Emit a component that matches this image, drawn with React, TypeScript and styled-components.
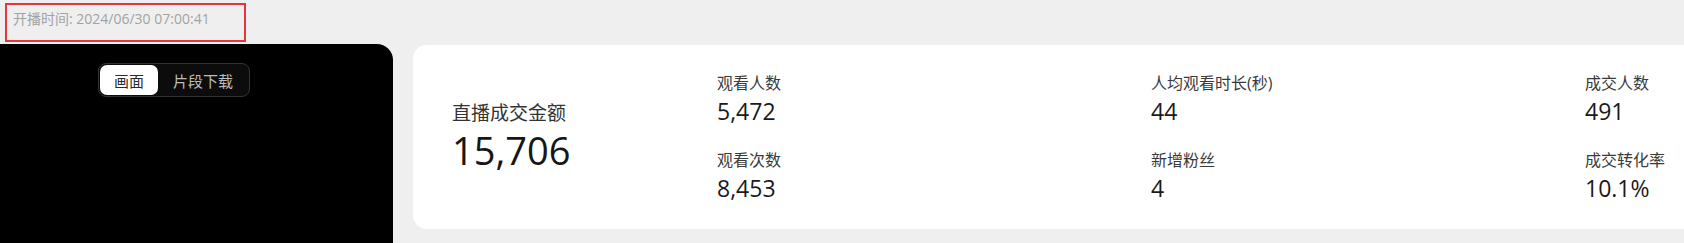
import React from "react";
import styled, { createGlobalStyle } from "styled-components";

const GlobalStyle = createGlobalStyle`
  html, body {
    margin: 0;
    padding: 0;
    background: #efefef;
    overflow: hidden;
  }
  body {
    font-family: "Open Sans", "Noto Sans CJK SC", sans-serif;
  }
`;

type Metric = { label: string; value: string };

const metricColumns: Metric[][] = [
  [
    { label: "观看人数", value: "5,472" },
    { label: "观看次数", value: "8,453" },
  ],
  [
    { label: "人均观看时长(秒)", value: "44" },
    { label: "新增粉丝", value: "4" },
  ],
  [
    { label: "成交人数", value: "491" },
    { label: "成交转化率", value: "10.1%" },
  ],
];

const App = () => {
  return (
    <>
      <GlobalStyle />
      <Page>
        <Header>
          <StartTime>开播时间: 2024/06/30 07:00:41</StartTime>
        </Header>
        <Main>
          <Player>
            <Segmented>
              <Segment active>画面</Segment>
              <Segment>片段下载</Segment>
            </Segmented>
          </Player>
          <StatsCard>
            <Headline>
              <HeadlineLabel>直播成交金额</HeadlineLabel>
              <HeadlineValue>15,706</HeadlineValue>
            </Headline>
            <MetricGrid>
              {metricColumns.map((col, i) => (
                <MetricColumn key={i}>
                  {col.map((m) => (
                    <MetricItem key={m.label}>
                      <MetricLabel>{m.label}</MetricLabel>
                      <MetricValue>{m.value}</MetricValue>
                    </MetricItem>
                  ))}
                </MetricColumn>
              ))}
            </MetricGrid>
          </StatsCard>
        </Main>
      </Page>
    </>
  );
};

const Page = styled.div`
  width: 1684px;
  height: 243px;
  overflow: hidden;
  display: flex;
  flex-direction: column;
`;

const Header = styled.div`
  height: 44px;
  flex-shrink: 0;
  display: flex;
  align-items: flex-start;
`;

const StartTime = styled.div`
  margin: 3px 0 0 5px;
  width: 241px;
  height: 39px;
  box-sizing: border-box;
  border: 2px solid #e2383d;
  padding: 4px 0 0 6px;
  font-size: 14px;
  line-height: 20px;
  color: #a3a3a3;
  white-space: nowrap;
`;

const Main = styled.div`
  display: flex;
  align-items: flex-start;
  gap: 20px;
  flex: 1;
`;

const Player = styled.div`
  width: 393px;
  height: 220px;
  flex-shrink: 0;
  background: #000;
  border-radius: 0 16px 0 0;
  box-sizing: border-box;
  padding: 19px 0 0 98px;
`;

const Segmented = styled.div`
  display: inline-flex;
  align-items: stretch;
  padding: 1px;
  height: 34px;
  box-sizing: border-box;
  border: 1px solid #333;
  border-radius: 8px;
  background: #0c0c0c;
`;

const Segment = styled.div<{ active?: boolean }>`
  display: flex;
  align-items: center;
  justify-content: center;
  padding: 0 ${(p) => (p.active ? 13 : 15)}px;
  width: ${(p) => (p.active ? "58px" : "auto")};
  box-sizing: border-box;
  border-radius: 7px;
  font-size: 15px;
  background: ${(p) => (p.active ? "#fff" : "transparent")};
  color: ${(p) => (p.active ? "#2b2b2b" : "#bcbcbc")};
`;

const StatsCard = styled.div`
  margin-top: 1px;
  height: 184px;
  flex: 1;
  margin-right: -40px;
  background: #fff;
  border-radius: 14px;
  box-sizing: border-box;
  padding-left: 39px;
  display: flex;
  align-items: center;
`;

const Headline = styled.div`
  width: 265px;
  flex-shrink: 0;
  display: flex;
  flex-direction: column;
`;

const HeadlineLabel = styled.div`
  font-size: 19px;
  line-height: 26px;
  color: #333;
`;

const HeadlineValue = styled.div`
  font-size: 38px;
  line-height: 48px;
  color: #161616;
`;

const MetricGrid = styled.div`
  display: grid;
  grid-template-columns: 434px 434px 200px;
`;

const MetricColumn = styled.div`
  display: flex;
  flex-direction: column;
  gap: 23px;
`;

const MetricItem = styled.div`
  display: flex;
  flex-direction: column;
  gap: 2px;
`;

const MetricLabel = styled.div`
  font-size: 16px;
  line-height: 22px;
  color: #3a3a3a;
  white-space: nowrap;
`;

const MetricValue = styled.div`
  font-size: 23px;
  line-height: 30px;
  color: #1a1a1a;
`;

export default App;
